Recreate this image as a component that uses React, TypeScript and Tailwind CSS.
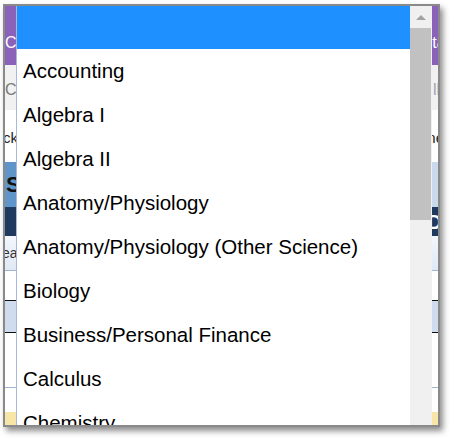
const subjects = [
  'Accounting',
  'Algebra I',
  'Algebra II',
  'Anatomy/Physiology',
  'Anatomy/Physiology (Other Science)',
  'Biology',
  'Business/Personal Finance',
  'Calculus',
  'Chemistry',
  'Computer Science',
];

const App = () => {
  return (
    <div className="w-[454px] h-[439px] bg-white overflow-hidden font-['Liberation_Sans',Arial,sans-serif]">
      <div className="ml-[3px] mt-[4px] w-[437px] h-[423px] border-2 border-[#8a8a8a] shadow-[3px_4px_6px_rgba(0,0,0,0.45)] relative overflow-hidden">
        {/* page behind the open select */}
        <div className="flex flex-col h-full">
          <div className="h-[59px] bg-[#8a62b9] flex items-center justify-between text-white text-[16px] pt-[14px]">
            <span>Class Search</span>
            <span className="mr-[-12px]">Stat</span>
          </div>
          <div className="h-[45px] bg-[#f1f1f1] flex items-center justify-between text-[#7a7a7a] text-[16px] pt-[4px]">
            <span>Course</span>
            <span className="text-[#9aa6b8] mr-[-2px]">ll</span>
          </div>
          <div className="h-[52px] bg-white flex items-center justify-between text-[#222] text-[15px] pt-[4px]">
            <span className="ml-[-2px]">ck</span>
            <span className="mr-[-6px]">ne</span>
          </div>
          <div className="h-[45px] flex">
            <div className="flex-1 bg-[#5f95c9] flex items-center text-[22px] font-bold text-[#111]">
              <span className="ml-[1px]">S</span>
            </div>
            <div className="w-[20px] bg-[#cad9ec]"></div>
          </div>
          <div className="h-[29px] bg-[#1f3a5e] flex items-center justify-end text-white font-bold text-[20px]">
            <span className="mr-[-4px]">D</span>
          </div>
          <div className="h-[35px] bg-gradient-to-b from-[#f4f7fc] to-[#dfe8f5] border-b border-[#9fb3d3] flex items-center text-[14px] text-[#333]">
            <span className="ml-[-3px]">ea</span>
          </div>
          <div className="h-[30px] bg-white border-b border-[#111]"></div>
          <div className="h-[32px] bg-[#cfdcee] border-b border-[#111]"></div>
          <div className="h-[55px] bg-white border-b border-[#9fb3d3]"></div>
          <div className="h-[24px] bg-white"></div>
          <div className="flex-1 bg-[#f7e6a8]"></div>
        </div>

        {/* open dropdown list */}
        <div className="absolute left-[11px] top-0 w-[416px] h-full bg-white border-l border-[#a9b8d6] flex text-black">
          <div className="flex-1 overflow-hidden">
            <div className="h-[43px] bg-[#1e90ff]"></div>
            {subjects.map((s) => (
              <div key={s} className="h-[44px] leading-[44px] pl-[6px] text-[20.5px] whitespace-nowrap">
                {s}
              </div>
            ))}
          </div>
          <div className="w-[22px] bg-[#f0f0f0] flex flex-col">
            <div className="h-[22px] flex items-center justify-center">
              <div className="w-0 h-0 border-l-[5px] border-r-[5px] border-b-[5px] border-l-transparent border-r-transparent border-b-[#a3a3a3]"></div>
            </div>
            <div className="h-[192px] bg-[#c1c1c1] mr-[1px]"></div>
          </div>
        </div>
      </div>
    </div>
  );
};

export default App;
